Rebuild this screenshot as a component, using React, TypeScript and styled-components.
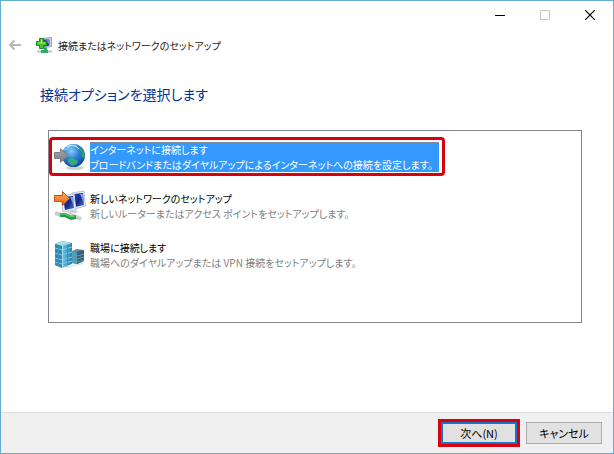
import React, { useState } from "react";
import styled, { createGlobalStyle } from "styled-components";

const GlobalStyle = createGlobalStyle`
  * { box-sizing: border-box; }
  body {
    margin: 0;
    background: #fff;
    font-family: "Noto Sans CJK JP", "Noto Sans", sans-serif;
    font-size: 10px;
    font-feature-settings: "palt";
    line-height: 15px;
    color: #000;
  }
  button, input { font: inherit; font-feature-settings: inherit; color: inherit; }
  svg { display: block; flex: none; }
`;

const Window = styled.div`
  display: flex;
  flex-direction: column;
  min-height: 100vh;
  border: 1px solid #64acd0;
  background: #fff;
`;

const TitleBar = styled.div`
  display: flex;
  justify-content: flex-end;
  height: 29px;
  padding-right: 1px;
`;

const CaptionButton = styled.button`
  display: flex;
  align-items: center;
  justify-content: center;
  width: 45px;
  height: 28px;
  padding: 0;
  border: 0;
  background: transparent;
`;

const Header = styled.header`
  display: flex;
  align-items: center;
  height: 30px;
  padding-left: 7px;
`;

const BackButton = styled.button`
  width: 14px;
  margin-right: 14px;
  padding: 0;
  border: 0;
  background: transparent;
`;

const WindowTitle = styled.h1`
  margin: 0 0 0 5px;
  font-size: 10px;
  font-weight: 400;
  color: #222;
`;

const Main = styled.main`
  flex: 1;
  padding: 22px 31px 0 39px;
`;

const Heading = styled.h2`
  margin: 0 0 24px;
  font-size: 14px;
  line-height: 24px;
  font-weight: 400;
  color: #003399;
`;

const OptionList = styled.div`
  display: flex;
  flex-direction: column;
  align-items: flex-start;
  gap: 10px;
  min-height: 193px;
  margin-left: 8px;
  padding: 6px 0;
  border: 1px solid #828790;
`;

const Option = styled.label<{ $marked?: boolean }>`
  display: flex;
  align-items: center;
  gap: 4px;
  padding: 2px 3px 1px 2px;
  border: 3px solid ${(p) => (p.$marked ? "#d9000d" : "transparent")};
  border-radius: 4px;

  > svg { margin: -1px 0; }
`;

const HiddenRadio = styled.input`
  appearance: none;
  position: absolute;
  margin: 0;
  opacity: 0;
`;

const OptionText = styled.span<{ $selected: boolean }>`
  display: flex;
  flex-direction: column;
  padding-right: 6px;
  white-space: nowrap;
  color: ${(p) => (p.$selected ? "#fff" : "#000")};
  background: ${(p) => (p.$selected ? "#3399ff" : "transparent")};
  outline: ${(p) => (p.$selected ? "1px dotted #7d8796" : "none")};
  outline-offset: -1px;
`;

const Description = styled.span<{ $selected: boolean }>`
  color: ${(p) => (p.$selected ? "#fff" : "#808080")};
`;

const Footer = styled.footer`
  display: flex;
  justify-content: flex-end;
  gap: 9px;
  padding: 9px 11px;
  border-top: 1px solid #dfdfdf;
  background: #f0f0f0;
`;

const ActionButton = styled.button<{ $primary?: boolean }>`
  display: flex;
  align-items: center;
  justify-content: center;
  width: 76px;
  height: 22px;
  padding: 0;
  font-size: 11px;
  border: ${(p) => (p.$primary ? "2px solid #1874c8" : "1px solid #adadad")};
  border-radius: 0;
  background: #e1e1e1;
  box-shadow: ${(p) => (p.$primary ? "0 0 0 3px #d9000d" : "none")};
`;

const SetupIcon = () => (
  <svg width="17" height="17" viewBox="0 0 17 17" aria-hidden="true">
    <path d="M6 1.500l9.500-1v9l-8 1z" fill="#d6dbe1" stroke="#9aa3b0" />
    <path d="M7.500 2.500h6v6l-4 1h-2z" fill="#2738a5" />
    <path d="M10 3h3v5z" fill="#6f83dd" />
    <path d="M8 10.500h3v3h-3z" fill="#2aa565" />
    <path d="M1 14.500h15" stroke="#bcc4c5" strokeWidth="2" />
    <path d="M5 13h7v3H5z" fill="#2dab69" />
    <path d="M3.500 1.500h4v3h3v4h-3v3h-4v-3h-3v-4h3z" fill="#45c52a" stroke="#178c1c" />
    <path d="M5 2.500h1v3h3v1H2v-1h3z" fill="#a0f76a" />
  </svg>
);

const GlobeIcon = () => (
  <svg width="32" height="30" viewBox="0 0 32 30" aria-hidden="true">
    <defs>
      <radialGradient id="sea" cx="0.4" cy="0.3" r="0.7">
        <stop offset="0" stopColor="#88cef6" />
        <stop offset="0.5" stopColor="#2b82d3" />
        <stop offset="1" stopColor="#124b9c" />
      </radialGradient>
      <linearGradient id="greyArrow" x2="0" y2="1">
        <stop stopColor="#a5a8ad" />
        <stop offset="1" stopColor="#777b82" />
      </linearGradient>
    </defs>
    <ellipse cx="21" cy="26" rx="9" ry="2" fill="#cdd2d6" />
    <circle cx="19.500" cy="13.500" r="11.500" fill="url(#sea)" />
    <path d="M14 4c3-2 7-2 9 0l-2 1-3-1-2 2-4 2-2 1c0-2 2-4 4-5z" fill="#75c6e6" />
    <path d="M26 5c3 3 5 6 5 10l-2 1-2-3 1-3-3-2z" fill="#2aa572" />
    <path d="M14 17l5-1 5 3-1 3-4 2c-3-1-5-3-5-7z" fill="#33a985" />
    <path d="M13 5c5-3 10-1 12 2" fill="none" stroke="#bee7fb" />
    <path d="M.5 10.500h6v-4l7 7-7 7v-4h-6z" fill="url(#greyArrow)" stroke="#7c8087" />
  </svg>
);

const NetworkIcon = () => (
  <svg width="32" height="32" viewBox="0 0 32 32" aria-hidden="true">
    <defs>
      <linearGradient id="screen" x2="1" y2="1">
        <stop stopColor="#2746c5" />
        <stop offset="0.5" stopColor="#122784" />
        <stop offset="1" stopColor="#4f78d8" />
      </linearGradient>
      <linearGradient id="orangeArrow" x2="0" y2="1">
        <stop stopColor="#ffb464" />
        <stop offset="1" stopColor="#e9600a" />
      </linearGradient>
    </defs>
    <path d="M18 3l12-2 1.500 15-11 3z" fill="#e4e9ee" stroke="#bdc5cf" />
    <path d="M20 4l9-1 1 12-9 2z" fill="url(#screen)" />
    <path d="M26 4h3l1 10z" fill="#829ee9" />
    <path d="M7 6l13-2 2 16-13 2z" fill="#e9edf1" stroke="#bdc5cf" />
    <path d="M9 7l10-1 1 12-9 2z" fill="url(#screen)" />
    <path d="M16 7h3l1 10z" fill="#829ee9" />
    <path d="M13 22l8-2 4 2-9 2z" fill="#c9d0d8" />
    <path d="M1 23l6 2 13 1 7 3" fill="none" stroke="#c8ced2" strokeWidth="4" />
    <path d="M6 25h5l6 3 5-1" fill="none" stroke="#209b3d" strokeWidth="4" />
    <path d="M6 24h5l6 3 4-1" fill="none" stroke="#65d574" />
    <path d="M.5 5.500h8v-4l7 7-7 7v-4h-8z" fill="url(#orangeArrow)" stroke="#c15016" />
  </svg>
);

const OfficeIcon = () => (
  <svg width="32" height="32" viewBox="0 0 32 32" aria-hidden="true">
    <defs>
      <linearGradient id="glass" x2="1" y2="0">
        <stop stopColor="#2989b8" />
        <stop offset="0.5" stopColor="#5bb9dc" />
        <stop offset="1" stopColor="#2b83a9" />
      </linearGradient>
    </defs>
    <path d="M10 27h8l11-4v2l-16 4z" fill="#d6dbdd" />
    <path d="M18 12l5-2 7 1v11l-7 3-5-1z" fill="#63899a" />
    <path d="M18 12l5 1v12l-5-1z" fill="#4c9ebc" />
    <path d="M23 13l7-2v11l-7 3z" fill="#365f71" />
    <path d="M18 16l5 1 7-2M18 19l5 1 7-2M18 22l5 1 7-2" fill="none" stroke="#6799ac" />
    <path d="M1 5l7-3 10 2v21l-10 4-7-3z" fill="url(#glass)" />
    <path d="M1 5l7-3 10 2-10 3z" fill="#a6deec" />
    <path d="M1 5l7 2v22l-7-3z" fill="#2f88b5" />
    <path d="M1 9l7 2 10-3M1 14l7 2 10-3M1 19l7 2 10-3M1 23l7 2 10-3" fill="none" stroke="#7bcae4" />
    <path d="M4.500 6v21M13.500 6v20" stroke="#3990b1" />
    <path d="M8.500 7v22" stroke="#a5dfee" />
  </svg>
);

const options = [
  {
    title: "インターネットに接続します",
    text: "ブロードバンドまたはダイヤルアップによるインターネットへの接続を設定します。",
    Icon: GlobeIcon,
  },
  {
    title: "新しいネットワークのセットアップ",
    text: "新しいルーターまたはアクセス ポイントをセットアップします。",
    Icon: NetworkIcon,
  },
  {
    title: "職場に接続します",
    text: "職場へのダイヤルアップまたは VPN 接続をセットアップします。",
    Icon: OfficeIcon,
  },
];

export default function App() {
  const [selected, setSelected] = useState(0);
  return (
    <>
      <GlobalStyle />
      <Window>
        <TitleBar>
          <CaptionButton aria-label="最小化">
            <svg width="10" height="10"><path d="M0 5.500h10" stroke="#000" /></svg>
          </CaptionButton>
          <CaptionButton aria-label="最大化" disabled>
            <svg width="10" height="10"><path d="M.5 .5h9v9h-9z" fill="none" stroke="#c4c4c4" /></svg>
          </CaptionButton>
          <CaptionButton aria-label="閉じる">
            <svg width="10" height="10"><path d="M0 0l10 10M10 0L0 10" stroke="#000" strokeWidth="1.200" /></svg>
          </CaptionButton>
        </TitleBar>
        <Header>
          <BackButton aria-label="戻る" disabled>
            <svg width="14" height="12"><path d="M13 6H2M6.500 1.500L2 6l4.500 4.500" fill="none" stroke="#b8b8b8" strokeWidth="2" /></svg>
          </BackButton>
          <SetupIcon />
          <WindowTitle>接続またはネットワークのセットアップ</WindowTitle>
        </Header>
        <Main>
          <Heading id="heading">接続オプションを選択します</Heading>
          <OptionList role="radiogroup" aria-labelledby="heading">
            {options.map(({ title, text, Icon }, i) => (
              <Option key={title} $marked={i === 0}>
                <HiddenRadio
                  type="radio"
                  name="connection"
                  checked={selected === i}
                  onChange={() => setSelected(i)}
                />
                <Icon />
                <OptionText $selected={selected === i}>
                  <span>{title}</span>
                  <Description $selected={selected === i}>{text}</Description>
                </OptionText>
              </Option>
            ))}
          </OptionList>
        </Main>
        <Footer>
          <ActionButton $primary>次へ(N)</ActionButton>
          <ActionButton>キャンセル</ActionButton>
        </Footer>
      </Window>
    </>
  );
}
